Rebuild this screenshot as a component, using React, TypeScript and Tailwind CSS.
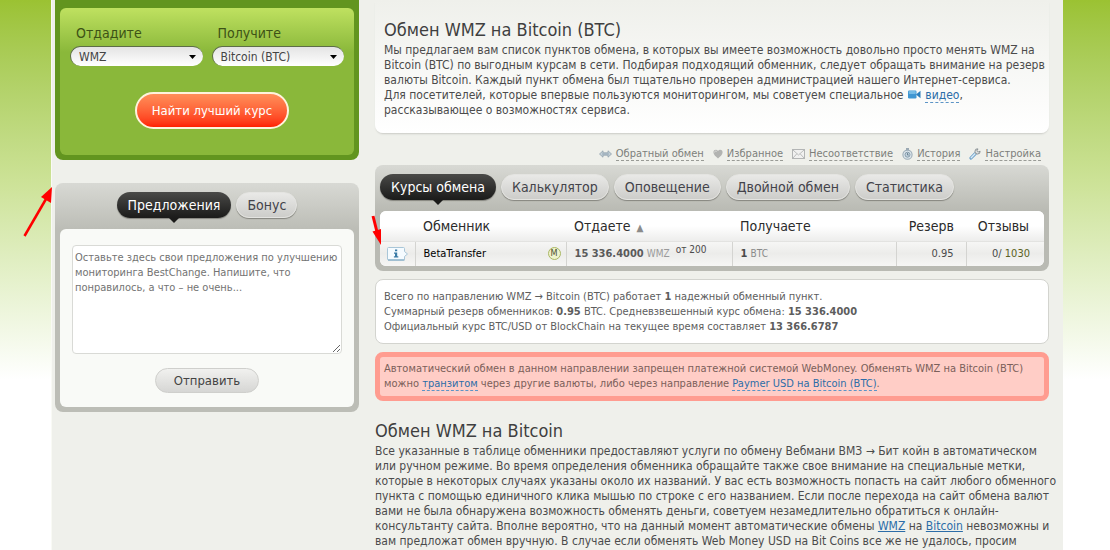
import { useState } from 'react';
import type { ReactNode } from 'react';

const linkClass = 'border-b border-dashed border-[#5c94c6] text-[#2c6da8]';

const tabs = ['Курсы обмена', 'Калькулятор', 'Оповещение', 'Двойной обмен', 'Статистика'];

function SwapIcon() {
  return (
    <svg width="13" height="8" viewBox="0 0 13 8">
      <path d="M0.5 4 4 0.8V2.8H9V0.8L12.5 4 9 7.2V5.2H4V7.2Z" fill="#c3d0d8" stroke="#8fa0ac" strokeWidth="0.8" />
      <path d="M3 4H10" stroke="#8ba0ae" strokeWidth="0.8" />
    </svg>
  );
}

function HeartIcon() {
  return (
    <svg width="10" height="10" viewBox="0 0 10 10">
      <path d="M5 9.6C3 7.6 0.4 6 0.4 3.3 0.4 0.6 3.8 0.1 5 2 6.2 0.1 9.6 0.6 9.6 3.3 9.6 6 7 7.6 5 9.6Z" fill="#b2b3b1" />
      <path d="M1.5 3.4C1.6 2 3 1.7 3.8 2.5" stroke="#dededc" strokeWidth="1" fill="none" />
    </svg>
  );
}

function MailIcon() {
  return (
    <svg width="13" height="10" viewBox="0 0 13 10">
      <rect x="0.5" y="0.5" width="12" height="9" fill="#f1f1f0" stroke="#b3b5b5" />
      <path d="M1 1 6.5 6 12 1M1 9 4.8 4.8M12 9 8.2 4.8" stroke="#b3b5b5" strokeWidth="0.9" fill="none" />
    </svg>
  );
}

function ClockIcon() {
  return (
    <svg width="11" height="12" viewBox="0 0 11 12">
      <rect x="4" y="0" width="3" height="2" fill="#9aa8b2" />
      <circle cx="5.5" cy="6.7" r="4.6" fill="#dde6ec" stroke="#9dadb8" strokeWidth="1.1" />
      <circle cx="5.5" cy="6.7" r="2.5" fill="#c3d3de" stroke="#7f96a6" strokeWidth="0.9" />
      <path d="M5.500 5V7H6.800" stroke="#5c7485" strokeWidth="0.8" fill="none" />
    </svg>
  );
}

function WrenchIcon() {
  return (
    <svg width="12" height="12" viewBox="0 0 12 12">
      <path d="M2 10 6.3 5.600" stroke="#6ba0c8" strokeWidth="3.200" strokeLinecap="round" />
      <path d="M2.200 9.800 6.300 5.600" stroke="#d9eaf6" strokeWidth="1.400" strokeLinecap="round" />
      <path d="M9 0.9A2.6 2.6 0 1 0 11.1 3.2L9.3 4 8 2.7Z" fill="#dcdedd" stroke="#838b8f" strokeWidth="0.9" />
    </svg>
  );
}

function VideoIcon() {
  return (
    <svg width="13" height="9" viewBox="0 0 13 9" className="mx-px inline-block align-baseline">
      <rect x="0" y="0.5" width="8.5" height="8" rx="1.2" fill="#3f97d3" />
      <rect x="0.8" y="1" width="7" height="3" rx="1" fill="#76bce6" />
      <path d="M8 4.5 12.5 0.8V8.2Z" fill="#2c7fbd" />
    </svg>
  );
}

function InfoIcon() {
  return (
    <svg width="22" height="14" viewBox="0 0 22 14">
      <path d="M1.5 0.5H16.5Q17.5 0.5 17.5 1.5V4.5L20.5 7 17.5 9.5V12Q17.5 13 16.5 13H1.5Q0.5 13 0.5 12V1.5Q0.5 0.5 1.5 0.5Z" fill="#f5fbff" stroke="#a9c6d8" />
      <path d="M1 13H17.5" stroke="#75a2be" />
      <path d="M8 2.6H10.2V4.2H8ZM7 5.4H10.2V9.3H11.3V10.6H6.9V9.3H8V6.7H7Z" fill="#3a7ba6" />
    </svg>
  );
}

const tools: { label: string; icon: ReactNode }[] = [
  { label: 'Обратный обмен', icon: <SwapIcon /> },
  { label: 'Избранное', icon: <HeartIcon /> },
  { label: 'Несоответствие', icon: <MailIcon /> },
  { label: 'История', icon: <ClockIcon /> },
  { label: 'Настройка', icon: <WrenchIcon /> },
];

interface TabProps {
  label: string;
  active: boolean;
  onClick: () => void;
}

function Tab({ label, active, onClick }: TabProps) {
  return (
    <button
      type="button"
      onClick={onClick}
      className={
        active
          ? 'relative h-[26px] rounded-full bg-linear-to-b from-[#4a4a48] to-[#1b1b1a] px-[11px] text-sm whitespace-nowrap text-white shadow-[0_1px_1px_#85857f]'
          : 'h-[26px] rounded-full border border-[#e4e4e1] bg-linear-to-b from-[#e9e9e7] to-[#cdcdca] px-2.5 text-sm whitespace-nowrap text-[#43434a] shadow-[0_1px_1px_#85857f]'
      }
    >
      {label}
      {active && (
        <svg width="10" height="5" viewBox="0 0 10 5" className="absolute top-full left-1/2 -translate-x-1/2">
          <path d="M0 0H10L5 5Z" fill="#1b1b1a" />
        </svg>
      )}
    </button>
  );
}

interface CurrencySelectProps {
  id: string;
  label: string;
  options: string[];
}

function CurrencySelect({ id, label, options }: CurrencySelectProps) {
  return (
    <div className="flex-1">
      <label htmlFor={id} className="block pl-1.5 text-sm leading-5 text-[#3d5216]">
        {label}
      </label>
      <div className="relative mt-[3px]">
        <select
          id={id}
          className="block h-5 w-full appearance-none rounded-full border-t border-l border-[#5d6d48] bg-linear-to-b from-[#e4e4e4] to-white pl-2 text-xs text-[#444]"
        >
          {options.map((o) => (
            <option key={o}>{o}</option>
          ))}
        </select>
        <svg width="7" height="4" viewBox="0 0 7 4" className="pointer-events-none absolute top-[9px] right-[7px]">
          <path d="M0 0H7L3.5 4Z" fill="#000" />
        </svg>
      </div>
    </div>
  );
}

function Sidebar() {
  const [tab, setTab] = useState('Предложения');
  const [message, setMessage] = useState(
    'Оставьте здесь свои предложения по улучшению\nмониторинга BestChange. Напишите, что\nпонравилось, а что – не очень...'
  );

  return (
    <aside className="w-[304px] shrink-0">
      <form className="rounded-b-lg bg-[#62951f] px-[5px] pt-2 pb-[5px]" onSubmit={(e) => e.preventDefault()}>
        <div className="h-[147px] rounded-md bg-linear-to-b from-[#bfe160] to-[#8ab83a] to-30% px-2.5 pt-[15px]">
          <div className="flex gap-[9px]">
            <CurrencySelect id="give" label="Отдадите" options={['WMZ', 'Bitcoin (BTC)']} />
            <CurrencySelect id="get" label="Получите" options={['Bitcoin (BTC)', 'WMZ']} />
          </div>
          <div className="mt-[26px] pl-2.5 text-center">
            <button
              type="submit"
              className="h-[37px] rounded-full border-2 border-[#fff3dd] bg-linear-to-b from-[#ff8e59] to-[#ff1e00] px-[15px] text-[13px] font-medium text-white"
            >
              Найти лучший курс
            </button>
          </div>
        </div>
      </form>

      <div className="mt-[23px] rounded-lg bg-[#bcbdb6] bg-linear-to-b from-[#d8d9d4] to-[#bcbdb6] to-[46px] px-[5px] pt-[9px] pb-[5px]">
        <div className="flex justify-center gap-[5px] pb-[11px]">
          {['Предложения', 'Бонус'].map((t) => (
            <Tab key={t} label={t} active={tab === t} onClick={() => setTab(t)} />
          ))}
        </div>
        <form
          className="rounded-md bg-[#f9faf7] px-3 pt-4 pb-3.5 text-center"
          onSubmit={(e) => e.preventDefault()}
        >
          <textarea
            aria-label="Предложения"
            value={message}
            onChange={(e) => setMessage(e.target.value)}
            className="block h-[109px] w-full resize rounded-sm border border-[#d9dad6] bg-white px-0.5 py-1 text-[11px] leading-[15px] text-[#737373]"
          />
          <button
            type="submit"
            className="mt-3.5 h-[25px] rounded-full border border-[#cfcfcc] bg-linear-to-b from-[#f1f1ef] to-[#d6d6d4] px-[18px] text-[13px] text-[#444]"
          >
            Отправить
          </button>
        </form>
      </div>
    </aside>
  );
}

function RatesTable() {
  return (
    <table className="w-full table-fixed overflow-hidden rounded-md bg-white text-left">
      <colgroup>
        <col className="w-[35px]" />
        <col className="w-[151px]" />
        <col className="w-[166px]" />
        <col />
        <col className="w-[70px]" />
        <col className="w-[78px]" />
      </colgroup>
      <thead>
        <tr className="h-[30px] bg-linear-to-b from-white from-50% to-[#ededec] text-sm text-[#2b2b2b] [&>th]:p-0 [&>th]:font-normal">
          <th />
          <th>
            <span className="pl-2">Обменник</span>
          </th>
          <th>
            <span className="pr-0.5 pl-2">Отдаете</span> <span className="text-[10px] text-[#8b8b8b]">▲</span>
          </th>
          <th>
            <span className="pl-2">Получаете</span>
          </th>
          <th className="text-right">
            <span className="pr-3">Резерв</span>
          </th>
          <th className="text-right">
            <span className="pr-[15px]">Отзывы</span>
          </th>
        </tr>
      </thead>
      <tbody>
        <tr className="h-[25px] bg-linear-to-b from-[#f7f7f6] via-[#ececea] to-[#f6f6f5] text-[11px] text-[#4a4a4a] [&>td]:border-t [&>td]:border-[#e3e3e1] [&>td]:p-0 [&>td+td]:border-l [&>td+td]:border-l-[#d4d4d1]">
          <td>
            <a href="#info" aria-label="BetaTransfer" className="flex pl-[7px]">
              <InfoIcon />
            </a>
          </td>
          <td>
            <div className="flex items-center justify-between pr-[5px] pl-2">
              <span className="text-black">BetaTransfer</span>
              <span className="flex size-[13px] items-center justify-center rounded-full border border-[#a9b764] bg-[#eff3cc] text-[9px] text-[#4c5130]">
                M
              </span>
            </div>
          </td>
          <td className="whitespace-nowrap">
            <b className="pl-2 text-[#5a5a5a]">15 336.4000</b>{' '}
            <span className="text-[10px] text-[#9a9a9a]">WMZ</span>
            <span className="relative -top-1 pl-1.5 text-[10px]">от 200</span>
          </td>
          <td>
            <b className="pl-2">1</b> <span className="text-[10px] text-[#8a8a8a]">BTC</span>
          </td>
          <td className="text-right">
            <span className="pr-3">0.95</span>
          </td>
          <td className="text-right">
            <span className="pr-3.5">
              0/ <span className="text-[#5b6222]">1030</span>
            </span>
          </td>
        </tr>
      </tbody>
    </table>
  );
}

function Content() {
  const [tab, setTab] = useState(tabs[0]);

  return (
    <main className="min-w-0 flex-1">
      <section className="h-[133px] rounded-b-lg bg-linear-to-b from-[#eff0eb] to-white px-[9px] pt-4 shadow-[0_2px_2px_-1px_#c9cac5]">
        <h1 className="text-lg leading-[27px] text-[#3f3f3f]">Обмен WMZ на Bitcoin (BTC)</h1>
        <p className="text-xs leading-[15px] whitespace-nowrap text-[#4b4b4b]">
          Мы предлагаем вам список пунктов обмена, в которых вы имеете возможность довольно просто менять WMZ на
          <br />
          Bitcoin (BTC) по выгодным курсам в сети. Подбирая подходящий обменник, следует обращать внимание на резерв
          <br />
          валюты Bitcoin. Каждый пункт обмена был тщательно проверен администрацией нашего Интернет-сервиса.
          <br />
          Для посетителей, которые впервые пользуются мониторингом, мы советуем специальное <VideoIcon />{' '}
          <a href="#video" className={linkClass}>
            видео
          </a>
          ,
          <br />
          рассказывающее о возможностях сервиса.
        </p>
      </section>

      <nav className="flex h-8 items-center justify-end gap-[9px] pt-2.5 pr-2 text-[11px] text-[#7d7f7b]">
        {tools.map((t) => (
          <a key={t.label} href="#tools" className="flex items-center gap-1">
            {t.icon}
            <span className="border-b border-dashed border-[#999b96] leading-[13px] whitespace-nowrap">{t.label}</span>
          </a>
        ))}
      </nav>

      <section className="rounded-lg bg-[#b9bab3] bg-linear-to-b from-[#d8d9d4] to-[#b9bab3] to-[46px] px-[5px] pt-[9px] pb-[5px]">
        <div className="flex gap-[5px] pb-[11px]">
          {tabs.map((t) => (
            <Tab key={t} label={t} active={tab === t} onClick={() => setTab(t)} />
          ))}
        </div>
        <RatesTable />
      </section>

      <p className="mt-2 rounded-lg border border-[#d3d4cf] bg-white px-2 py-[9px] text-[11px] leading-[15px] text-[#5d5d5d]">
        Всего по направлению WMZ → Bitcoin (BTC) работает <b>1</b> надежный обменный пункт.
        <br />
        Суммарный резерв обменников: <b>0.95</b> BTC. Средневзвешенный курс обмена: <b>15 336.4000</b>
        <br />
        Официальный курс BTC/USD от BlockChain на текущее время составляет <b>13 366.6787</b>
      </p>

      <p className="mt-2 rounded-lg border-[5px] border-[#ff9c90] bg-[#ffcdc6] px-1 pt-1 pb-[5px] text-[11px] leading-[15px] text-[#7b605a]">
        Автоматический обмен в данном направлении запрещен платежной системой WebMoney. Обменять WMZ на Bitcoin (BTC)
        <br />
        можно{' '}
        <a href="#transit" className={linkClass}>
          транзитом
        </a>{' '}
        через другие валюты, либо через направление{' '}
        <a href="#paymer" className={linkClass}>
          Paymer USD на Bitcoin (BTC)
        </a>
        .
      </p>

      <section className="pt-[17px]">
        <h2 className="text-lg leading-[26px] text-[#3f3f3f]">Обмен WMZ на Bitcoin</h2>
        <p className="text-xs leading-[15px] whitespace-nowrap text-[#4b4b4b]">
          Все указанные в таблице обменники предоставляют услуги по обмену Вебмани ВМЗ → Бит койн в автоматическом
          <br />
          или ручном режиме. Во время определения обменника обращайте также свое внимание на специальные метки,
          <br />
          которые в некоторых случаях указаны около их названий. У вас есть возможность попасть на сайт любого обменного
          <br />
          пункта с помощью единичного клика мышью по строке с его названием. Если после перехода на сайт обмена валют
          <br />
          вами не была обнаружена возможность обменять деньги, советуем незамедлительно обратиться к онлайн-
          <br />
          консультанту сайта. Вполне вероятно, что на данный момент автоматические обмены{' '}
          <a href="#wmz" className="text-[#2c6da8] underline">
            WMZ
          </a>{' '}
          на{' '}
          <a href="#bitcoin" className="text-[#2c6da8] underline">
            Bitcoin
          </a>{' '}
          невозможны и
          <br />
          вам предложат обмен вручную. В случае если обменять Web Money USD на Bit Coins все же не удалось, просим
        </p>
      </section>
    </main>
  );
}

export default function App() {
  return (
    <div className="relative h-screen overflow-hidden bg-linear-to-b from-[#9bc232] via-[#cce296] via-[180px] to-white to-[380px] pr-1 pl-2 font-['DejaVu_Sans_Condensed','DejaVu_Sans',sans-serif]">
      <div className="mx-auto flex min-h-full max-w-[1012px] gap-4 border-l border-[#f9faf5] bg-[#eff0eb] pr-3.5 pl-[3px]">
        <Sidebar />
        <Content />
      </div>

      {/* pointer arrows */}
      <svg width="32" height="52" viewBox="0 0 32 52" className="pointer-events-none absolute top-[186px] left-[22px]">
        <path d="M2.5 50 24 13" stroke="#f00" strokeWidth="2.5" />
        <path d="M30 1 29 17 19 11Z" fill="#f00" />
      </svg>
      <svg width="12" height="32" viewBox="0 0 12 32" className="pointer-events-none absolute top-[214px] left-[371px]">
        <path d="M2 2 6 18" stroke="#f00" strokeWidth="3" />
        <path d="M10 31 1.5 17.500 10 15Z" fill="#f00" />
      </svg>
    </div>
  );
}
